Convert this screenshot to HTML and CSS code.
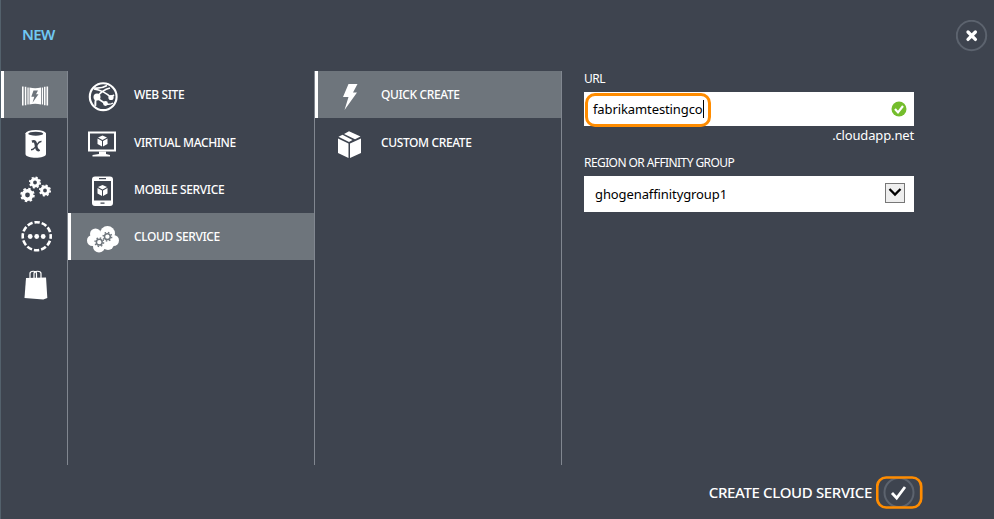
FILE: index.html
```html
<!DOCTYPE html>
<html lang="en">
<head>
<meta charset="utf-8">
<title>New cloud service</title>
<link rel="stylesheet" href="styles.css">
</head>
<body>
<div class="drawer">
  <header class="header">
    <h1 class="title">NEW</h1>
    <button class="close" aria-label="Close">
      <svg width="32" height="32" viewBox="0 0 32 32"><circle cx="15.500" cy="15.500" r="14.700" fill="none" stroke="#5c636e" stroke-width="2"/><path d="M12 12l7.400 7.400M19.400 12L12 19.400" stroke="#fff" stroke-width="3.300" stroke-linecap="round"/></svg>
    </button>
  </header>
  <main class="panels">
    <nav class="column categories">
      <div class="row selected">
        <svg class="icon" width="30" height="24" viewBox="20 83.500 30 24" fill="#fff"><path d="M22 87h1.600v19H22zM24.800 87.300h1.500v18.400h-1.500zM27.400 88h1.300v17h-1.300zM29.500 88q5.500 1.500 11.500 0v17q-6-1.500-11.500 0zM41.800 88h1.300v17h-1.300zM44 87.300h1.500v18.400H44zM46.500 87h1.600v19h-1.600z"/><path d="M33.500 91h4.500l-2 3.800h2.500l-6 8.500 1.800-6h-3z" fill="#6e757c"/></svg>
      </div>
      <div class="row">
        <svg class="icon" width="30" height="32" viewBox="20 128 30 32" fill="#fff"><path d="M25.500 134v21c0 5 20.500 5 20.500 0v-21z"/><ellipse cx="35.750" cy="134.500" rx="10.250" ry="3.500"/><ellipse cx="35.750" cy="134.700" rx="7.500" ry="2" fill="#3e444f"/><path d="M32 142.700c3-1.300 3.600.5 4 3.500s1 6 3.500 4.500" fill="none" stroke="#3e444f" stroke-width="2.700"/><path d="M41.500 142.500c-3-.5-4 3-5.500 4.700s-2 3.500-5 3.500" fill="none" stroke="#3e444f" stroke-width="1.400"/></svg>
      </div>
      <div class="row">
        <svg class="icon" width="32" height="28" viewBox="20.500 176 32 28" fill="none" stroke="#fff"><circle cx="35.500" cy="182.500" r="3.400" stroke-width="3"/><circle cx="35.500" cy="182.500" r="5.200" stroke-width="1.700" stroke-dasharray="2.050 2.034"/><circle cx="28" cy="195" r="4.200" stroke-width="3.600"/><circle cx="28" cy="195" r="6.300" stroke-width="1.900" stroke-dasharray="2.500 2.448"/><circle cx="45.500" cy="190.500" r="3.400" stroke-width="3"/><circle cx="45.500" cy="190.500" r="5.200" stroke-width="1.700" stroke-dasharray="2.050 2.034"/></svg>
      </div>
      <div class="row">
        <svg class="icon" width="34" height="34" viewBox="20 219.500 34 34" fill="#fff"><circle cx="36.700" cy="235.700" r="14" fill="none" stroke="#fff" stroke-width="2.600" stroke-dasharray="5.400 1.930" stroke-dashoffset="2.700"/><circle cx="30.200" cy="236" r="2.400"/><circle cx="36.700" cy="236" r="2.400"/><circle cx="43.200" cy="236" r="2.400"/></svg>
      </div>
      <div class="row">
        <svg class="icon" width="30" height="34" viewBox="20 268 30 34"><path d="M26 278l20-.5 1.300 20.500-4 1.500L24.500 298z" fill="#fff"/><path d="M30 278v-4.500c0-3 6.500-3 6.500 0v4.500M34 278v-4.500c0-3 7-3 7 0v4.500" fill="none" stroke="#fff" stroke-width="1.200"/></svg>
      </div>
    </nav>
    <nav class="column wide">
      <div class="row">
        <svg class="icon" width="34" height="32" viewBox="86 81 34 32" fill="none" stroke="#fff"><circle cx="103.200" cy="96.700" r="13.400" stroke-width="2.100"/><path d="M94 88q7 1 13-2.500M97 97q5-7 13-9M94 89q9 1 17 8.500M97 98l9 6M95.500 106q-1-5 1.500-9M111 97l3-2" stroke-width="1.700"/><path d="M106 104q4 1 7-1" stroke-width="1.500"/><g fill="#fff" stroke="none"><circle cx="97" cy="97" r="3.500"/><circle cx="111" cy="97.500" r="2.600"/><circle cx="105.500" cy="103.500" r="2.400"/></g></svg>
        <span class="label">WEB SITE</span>
      </div>
      <div class="row">
        <svg class="icon" width="34" height="32" viewBox="86 129.500 34 32"><path d="M89 133h26v18H89z" fill="none" stroke="#fff" stroke-width="2"/><path d="M99 152h7v2.500l4 1v1.500H92.500v-1.500L99 154.500z" fill="#fff"/><path d="M102.500 136l4.500 2-4.500 2.500-4.500-2.500zM97.500 139l4.500 2.500v5.500l-4.500-2.500zM103 141.500l4.500-2.500v5.500l-4.500 2.500z" fill="#fff"/></svg>
        <span class="label">VIRTUAL MACHINE</span>
      </div>
      <div class="row">
        <svg class="icon" width="34" height="34" viewBox="86 174 34 34"><path fill-rule="evenodd" d="M95 175.500h15q3 0 3 3v23.500q0 3-3 3H95q-3 0-3-3v-23.500q0-3 3-3zm-1 4.500v19.500h17V180z" fill="#fff"/><path d="M99 177.700h7M100.500 202.200h4" stroke="#3e444f" stroke-width="1.300"/><path d="M102.500 184l4.500 2-4.500 2.500-4.500-2.500zM97.500 187l4.500 2.500v5.500l-4.500-2.500zM103 189.500l4.500-2.500v5.500l-4.500 2.500z" fill="#fff"/></svg>
        <span class="label">MOBILE SERVICE</span>
      </div>
      <div class="row selected">
        <svg class="icon" width="34" height="32" viewBox="86 223 34 32"><g fill="#fff"><circle cx="95.500" cy="234" r="5.500"/><circle cx="107.500" cy="233.500" r="7.500"/><circle cx="113.500" cy="240.500" r="5.500"/><circle cx="92.500" cy="240.500" r="5.500"/><circle cx="99" cy="246.500" r="6"/><circle cx="108" cy="244" r="6"/><path d="M94 233h18v13H94z"/></g><g fill="none" stroke="#6e757c"><circle cx="99.300" cy="242.200" r="2.900" stroke-width="1.500"/><circle cx="99.300" cy="242.200" r="4.300" stroke-width="1.400" stroke-dasharray="1.500 1.877"/><circle cx="107.400" cy="236.700" r="2.900" stroke-width="1.500"/><circle cx="107.400" cy="236.700" r="4.300" stroke-width="1.400" stroke-dasharray="1.500 1.877"/></g></svg>
        <span class="label">CLOUD SERVICE</span>
      </div>
    </nav>
    <nav class="column wide">
      <div class="row selected">
        <svg class="icon" width="34" height="32" viewBox="333 81 34 32"><path d="M348.500 84h9l-4.500 8.500h4L344.500 110l4-13H343z" fill="#fff"/></svg>
        <span class="label">QUICK CREATE</span>
      </div>
      <div class="row">
        <svg class="icon" width="34" height="34" viewBox="333 129 34 34" fill="#fff"><path d="M338 139.500l10.500 5v14.500l-10.500-5zM350 144.500l11-5V154l-11 5zM338.500 137.700l4-2 10 5.300-3.500 1.900zM344 135l5-2.700 11.500 5.200-5.500 2.700z"/></svg>
        <span class="label">CUSTOM CREATE</span>
      </div>
    </nav>
    <form class="form">
      <label class="field-label" for="url">URL</label>
      <div class="field url-field">
        <span id="url" class="url-value">fabrikamtestingco</span><i class="caret"></i>
        <svg class="valid" width="16" height="16" viewBox="0 0 16 16"><circle cx="8" cy="8" r="7.500" fill="#74bd2c"/><path d="M4 8l3 3.400 5-6.400" fill="none" stroke="#fff" stroke-width="2.200"/></svg>
        <i class="url-highlight"></i>
      </div>
      <div class="suffix">.cloudapp.net</div>
      <div class="field-label region">REGION OR AFFINITY GROUP</div>
      <div class="field select">
        <span class="select-value">ghogenaffinitygroup1</span>
        <span class="arrow"><svg width="18" height="18" viewBox="0 0 18 18"><path d="M3.500 5L9 10.500 14.500 5" fill="none" stroke="#000" stroke-width="2.300"/></svg></span>
      </div>
    </form>
  </main>
  <footer class="footer">
    <span class="submit-label">CREATE CLOUD SERVICE</span>
    <button class="submit" aria-label="Create cloud service">
      <svg width="48" height="34" viewBox="0 0 48 34"><circle cx="23" cy="16.500" r="14.500" fill="none" stroke="#5c636e" stroke-width="2"/><path d="M16 17l4.700 5L29 11" fill="none" stroke="#fff" stroke-width="2.800"/><rect x="1.200" y="1.500" width="44" height="30" rx="9" fill="none" stroke="#ff8c00" stroke-width="2.700"/></svg>
    </button>
  </footer>
</div>
</body>
</html>
```
FILE: styles.css
```css
* { box-sizing: border-box; }
body { margin: 0; background: #3e444f; color: #fff; font-family: "Noto Sans", "Open Sans", sans-serif; }
button { padding: 0; border: 0; background: none; color: inherit; }
svg { display: block; flex: none; }
.drawer { width: 994px; height: 519px; border-left: 1px solid #53616c; display: flex; flex-direction: column; overflow: hidden; }
.header { height: 71px; flex: none; display: flex; justify-content: space-between; padding: 19px 6px 0 21px; }
.title { margin: 4px 0 0; font-size: 15px; line-height: 22px; font-weight: 600; letter-spacing: -.6px; color: #70c8f3; }
.close { height: 32px; margin-top: 1px; }
.panels { display: flex; height: 394px; flex: none; }
.column { border-right: 1px solid #818790; }
.categories { width: 67px; }
.wide { width: 247px; }
.row { height: 47px; display: flex; align-items: center; border-left: 3px solid transparent; padding-left: 15px; }
.row:first-child { margin-bottom: 1px; }
.selected { background: #6e757c; border-left-color: #fff; }
.categories .row { padding-left: 16px; }
.categories .row:last-child { margin-top: 1px; }
.wide .icon { position: relative; top: 2px; }
.label { margin-left: 14px; font-size: 12px; font-weight: 500; line-height: 18px; letter-spacing: -.38px; white-space: nowrap; }
.form { margin-left: 22px; width: 330px; }
.field-label { display: block; height: 21px; font-size: 12px; line-height: 16px; letter-spacing: -.5px; white-space: nowrap; }
.region { letter-spacing: -.58px; }
.field { background: #fff; color: #000; display: flex; align-items: center; font-size: 13px; letter-spacing: -.1px; }
.url-field { height: 34px; position: relative; padding: 0 7px 0 9px; }
.caret { width: 1px; height: 18px; background: #000; }
.valid { margin-left: auto; }
.url-highlight { position: absolute; left: 1px; top: 1px; width: 126px; height: 34px; border: 3px solid #ff8c00; border-radius: 10px; }
.suffix { text-align: right; font-size: 13px; line-height: 18px; height: 29px; letter-spacing: -.15px; }
.select { height: 36px; padding: 0 9px 0 11px; justify-content: space-between; }
.arrow { width: 20px; height: 20px; margin-top: -2px; background: #eee; border: 1px solid #777; }
.footer { display: flex; justify-content: flex-end; align-items: center; height: 34px; margin-top: 11px; padding-right: 70px; }
.submit-label { font-size: 15px; line-height: 20px; font-weight: 500; letter-spacing: -.35px; margin: -2px 4px 0 0; white-space: nowrap; }
```
